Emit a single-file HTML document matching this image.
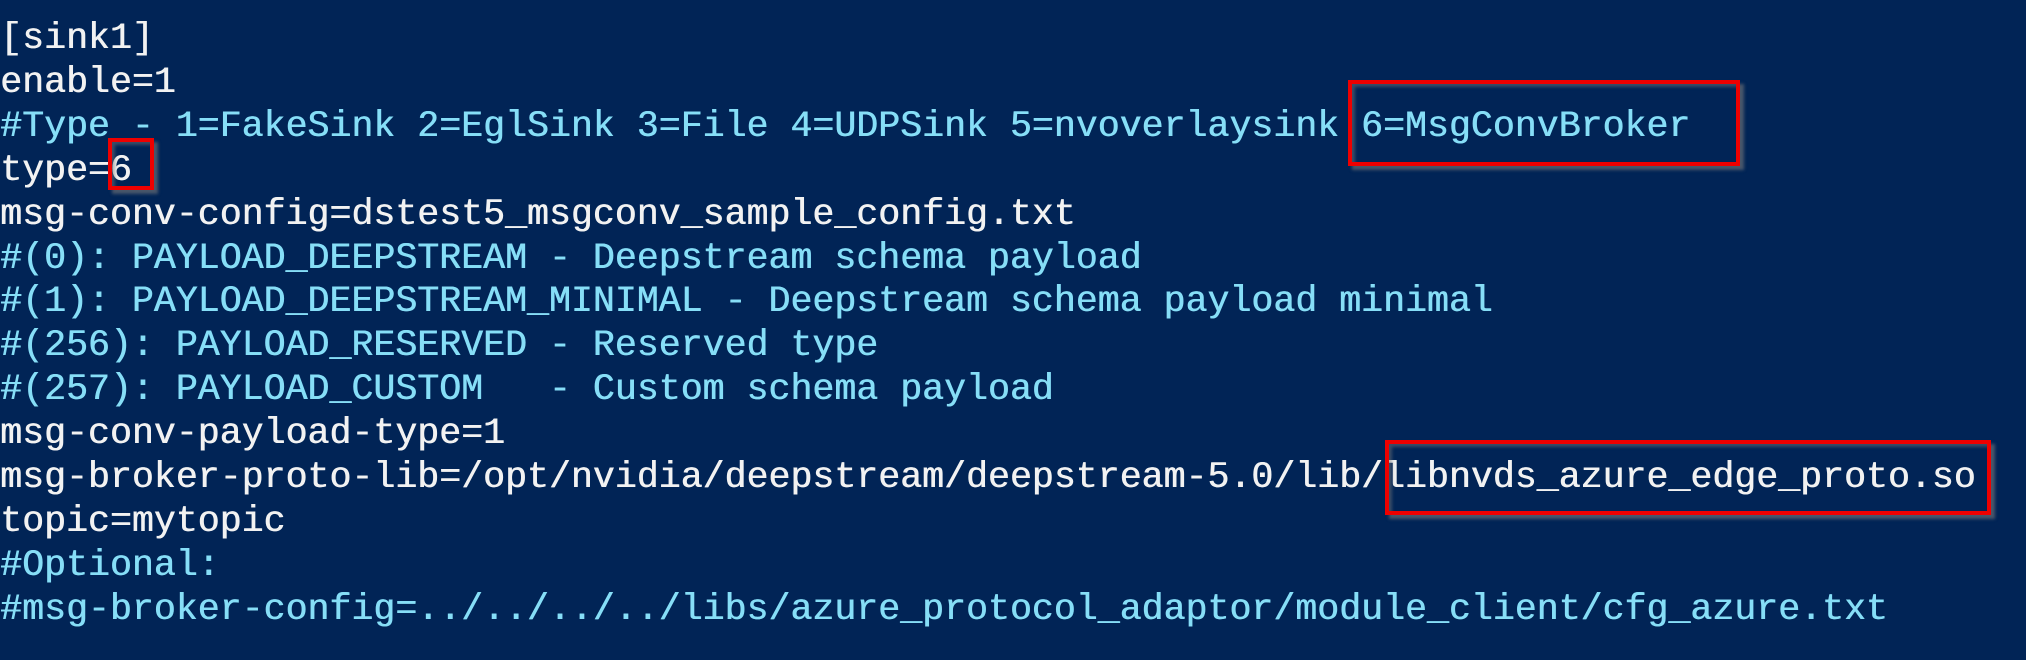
<!DOCTYPE html>
<html><head><style>
html,body{margin:0;padding:0;}
body{width:2026px;height:660px;background:#012456;overflow:hidden;position:relative;}
pre{position:absolute;left:0;top:17px;margin:0;font-family:"Liberation Mono","DejaVu Sans Mono",monospace;font-size:36.6px;line-height:43.9px;color:#f2f2f2;white-space:pre;text-shadow:0.6px 0 0 currentColor;}
.c{color:#86def7;}
.box{position:absolute;border:4px solid #ee0000;box-shadow:4px 4px 3px rgba(120,120,120,0.6), inset 3px 3px 3px rgba(120,120,120,0.5);}
</style></head><body>
<pre>[sink1]
enable=1
<span class="c">#Type - 1=FakeSink 2=EglSink 3=File 4=UDPSink 5=nvoverlaysink 6=MsgConvBroker</span>
type=6
msg-conv-config=dstest5_msgconv_sample_config.txt
<span class="c">#(0): PAYLOAD_DEEPSTREAM - Deepstream schema payload</span>
<span class="c">#(1): PAYLOAD_DEEPSTREAM_MINIMAL - Deepstream schema payload minimal</span>
<span class="c">#(256): PAYLOAD_RESERVED - Reserved type</span>
<span class="c">#(257): PAYLOAD_CUSTOM   - Custom schema payload</span>
msg-conv-payload-type=1
msg-broker-proto-lib=/opt/nvidia/deepstream/deepstream-5.0/lib/libnvds_azure_edge_proto.so
topic=mytopic
<span class="c">#Optional:</span>
<span class="c">#msg-broker-config=../../../../libs/azure_protocol_adaptor/module_client/cfg_azure.txt</span></pre>
<div class="box" style="left:1348px;top:80px;width:384px;height:78px;"></div>
<div class="box" style="left:108px;top:138px;width:38px;height:44px;"></div>
<div class="box" style="left:1385px;top:440px;width:598px;height:67px;"></div>
</body></html>
